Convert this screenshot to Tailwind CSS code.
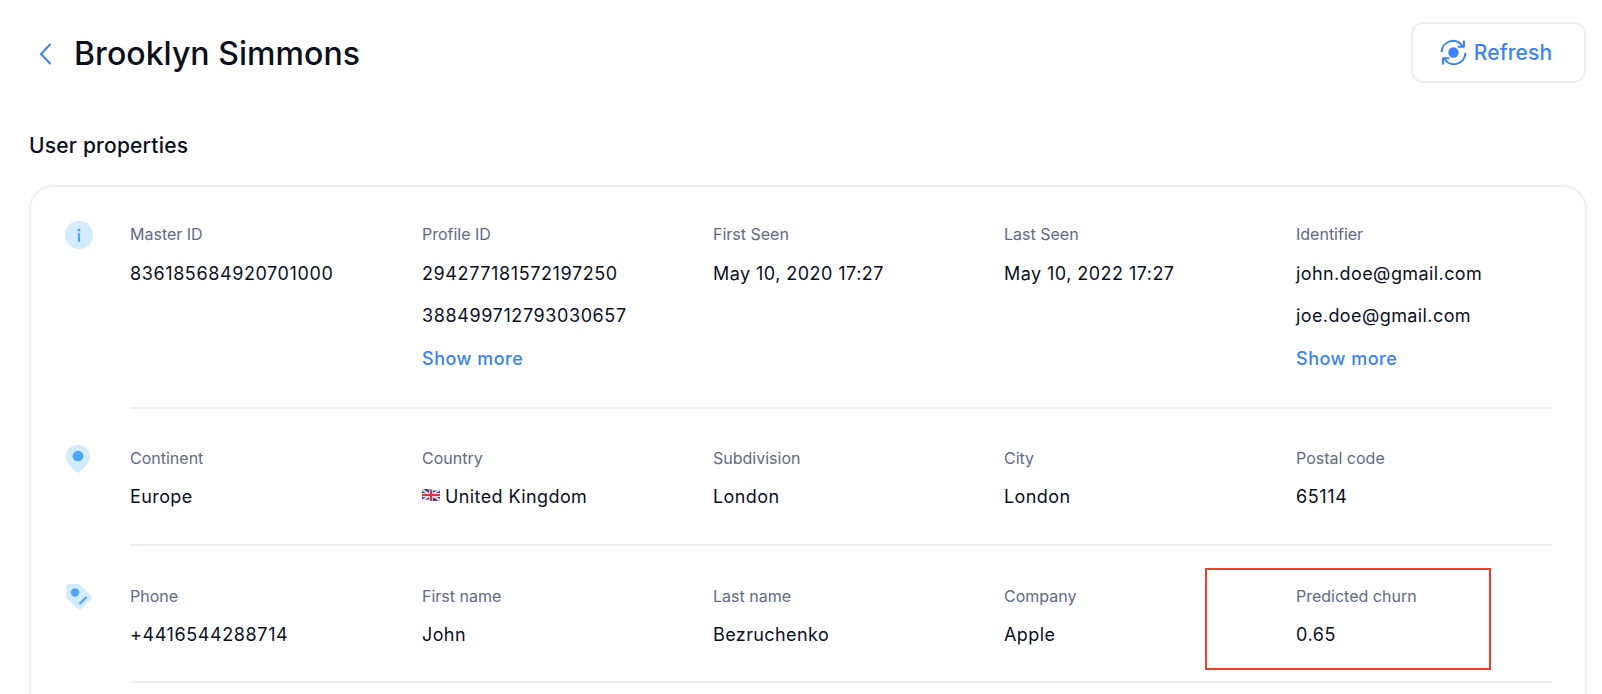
<!DOCTYPE html>
<html lang="en">
<head>
  <meta charset="UTF-8">
  <title>Brooklyn Simmons</title>
  <script src="https://cdn.jsdelivr.net/npm/@tailwindcss/browser@4"></script>
</head>
<body class="bg-white overflow-hidden h-[694px] font-['Inter',sans-serif] text-[#0b0f1e]">
  <div class="pl-[29px] pr-[15px] pt-[22px]">
    <!-- header -->
    <div class="flex items-center justify-between h-[60px]">
      <div class="flex items-center">
        <svg class="ml-[10px] mt-[3px] w-[13px] h-[22px]" viewBox="0 0 13 22" fill="none"><path d="M11 1.5 2 11l9 9.5" stroke="#3b82f6" stroke-width="2" stroke-linecap="round" stroke-linejoin="round"/></svg>
        <h1 class="ml-[22px] mt-[4px] text-[32px] font-medium leading-[40px] tracking-[0.05px]">Brooklyn Simmons</h1>
      </div>
      <button class="w-[175px] h-[61px] mr-[1px] mt-[1px] border-2 border-[#eeeff5] rounded-[12px] flex items-center justify-center gap-[7px] pr-[5px] text-[#3b82f6] text-[21px] font-medium tracking-[0.1px]">
        <svg class="w-[27px] h-[27px]" viewBox="0 0 26 26" fill="none">
          <circle cx="13" cy="13" r="5" fill="#3b82f6"/>
          <path d="M1.5 12.5A11 11 0 0 1 21.5 6.5" stroke="#3b82f6" stroke-width="2"/>
          <path d="M24.500 13.500A11 11 0 0 1 4.500 19.500" stroke="#3b82f6" stroke-width="2"/>
          <path d="M23 1.500v6h-6" stroke="#3b82f6" stroke-width="2" stroke-linejoin="round"/>
          <path d="M3 24.500v-6h6" stroke="#3b82f6" stroke-width="2" stroke-linejoin="round"/>
        </svg>
        Refresh
      </button>
    </div>

    <h2 class="mt-[51px] text-[21px] font-medium leading-[26px] tracking-[0.2px]">User properties</h2>

    <!-- card -->
    <div class="relative mt-[26px] border-2 border-[#eeeff5] rounded-[24px] pl-[99px] pr-[33px] h-[600px] text-[18px] leading-[24px] tracking-[0.4px]">
      <!-- row 1 -->
      <div class="relative h-[222px] pt-[36px] border-b-2 border-[#eeeff5]">
        <div class="absolute left-[-65px] top-[34px] w-[28px] h-[28px] rounded-full bg-[#d2ecfe] flex items-center justify-center">
          <svg class="w-[4px] h-[14px]" viewBox="0 0 4 14"><circle cx="2" cy="2" r="1.6" fill="#4da6fa"/><rect x="0.9" y="5" width="2.2" height="9" rx="1" fill="#4da6fa"/></svg>
        </div>
        <div class="grid grid-cols-[292px_291px_291px_292px_1fr]">
          <div>
            <p class="text-[16px] leading-[22px] tracking-normal text-[#616a85]">Master ID</p>
            <p class="mt-[17px] tracking-[0.6px]">836185684920701000</p>
          </div>
          <div>
            <p class="text-[16px] leading-[22px] tracking-normal text-[#616a85]">Profile ID</p>
            <p class="mt-[17px] tracking-[0.6px]">294277181572197250</p>
            <p class="mt-[18px] tracking-[0.6px]">388499712793030657</p>
            <a class="block mt-[19px] font-medium tracking-[0.5px] text-[#3b82f6]">Show more</a>
          </div>
          <div>
            <p class="text-[16px] leading-[22px] tracking-normal text-[#616a85]">First Seen</p>
            <p class="mt-[17px] tracking-[0.45px]">May 10, 2020 17:27</p>
          </div>
          <div>
            <p class="text-[16px] leading-[22px] tracking-normal text-[#616a85]">Last Seen</p>
            <p class="mt-[17px] tracking-[0.45px]">May 10, 2022 17:27</p>
          </div>
          <div>
            <p class="text-[16px] leading-[22px] tracking-normal text-[#616a85]">Identifier</p>
            <p class="mt-[17px]">john.doe@gmail.com</p>
            <p class="mt-[18px]">joe.doe@gmail.com</p>
            <a class="block mt-[19px] font-medium tracking-[0.5px] text-[#3b82f6]">Show more</a>
          </div>
        </div>
      </div>
      <!-- row 2 -->
      <div class="relative h-[137px] pt-[38px] border-b-2 border-[#eeeff5]">
        <svg class="absolute left-[-65px] top-[35px] w-[26px] h-[30px]" viewBox="0 0 26 30">
          <path d="M13 1C6 1 1 6 1 12.500C1 19 8 25 13 29C18 25 25 19 25 12.500C25 6 20 1 13 1Z" fill="#d2ecfe"/>
          <circle cx="13" cy="12" r="5.300" fill="#4da6fa"/>
        </svg>
        <div class="grid grid-cols-[292px_291px_291px_292px_1fr]">
          <div>
            <p class="text-[16px] leading-[22px] tracking-normal text-[#616a85]">Continent</p>
            <p class="mt-[16px]">Europe</p>
          </div>
          <div>
            <p class="text-[16px] leading-[22px] tracking-normal text-[#616a85]">Country</p>
            <p class="mt-[16px] flex items-center">
              <svg class="w-[18px] h-[14px] mr-[5px] mb-[5px]" viewBox="0 0 60 44">
                <path d="M0 5C10 0 20 2 30 5C40 8 50 8 60 4V39C50 43 40 43 30 40C20 37 10 35 0 40Z" fill="#2a3f8f"/>
                <path d="M0 5 60 39M60 4 0 40" stroke="#f4d7dc" stroke-width="7"/>
                <path d="M30 4v37M0 22h60" stroke="#f4d7dc" stroke-width="13"/>
                <path d="M30 4v37M0 22h60" stroke="#d8324a" stroke-width="7"/>
              </svg>
              United Kingdom
            </p>
          </div>
          <div>
            <p class="text-[16px] leading-[22px] tracking-normal text-[#616a85]">Subdivision</p>
            <p class="mt-[16px]">London</p>
          </div>
          <div>
            <p class="text-[16px] leading-[22px] tracking-normal text-[#616a85]">City</p>
            <p class="mt-[16px]">London</p>
          </div>
          <div>
            <p class="text-[16px] leading-[22px] tracking-normal text-[#616a85]">Postal code</p>
            <p class="mt-[16px] tracking-[0.6px]">65114</p>
          </div>
        </div>
      </div>
      <!-- row 3 -->
      <div class="relative h-[137px] pt-[39px] border-b-2 border-[#eeeff5]">
        <svg class="absolute left-[-65px] top-[37px] w-[28px] h-[28px]" viewBox="0 0 28 28">
          <path d="M5 1H12.500C14 1 15 1.500 16 2.500L25.500 12C27 13.500 27 15.500 25.500 17L17.500 25C16 26.500 14 26.500 12.500 25.500L2.500 16C1.500 15 1 14 1 12.500V5C1 2.500 2.500 1 5 1Z" fill="#d2ecfe"/>
          <circle cx="10" cy="9.500" r="4.200" fill="#4da6fa"/>
          <path d="M15 20.500 21 14.500" stroke="#4da6fa" stroke-width="2.200" stroke-linecap="round"/>
        </svg>
        <div class="grid grid-cols-[292px_291px_291px_292px_1fr]">
          <div>
            <p class="text-[16px] leading-[22px] tracking-normal text-[#616a85]">Phone</p>
            <p class="mt-[16px] tracking-[0.6px]">+4416544288714</p>
          </div>
          <div>
            <p class="text-[16px] leading-[22px] tracking-normal text-[#616a85]">First name</p>
            <p class="mt-[16px]">John</p>
          </div>
          <div>
            <p class="text-[16px] leading-[22px] tracking-normal text-[#616a85]">Last name</p>
            <p class="mt-[16px]">Bezruchenko</p>
          </div>
          <div>
            <p class="text-[16px] leading-[22px] tracking-normal text-[#616a85]">Company</p>
            <p class="mt-[16px]">Apple</p>
          </div>
          <div>
            <p class="text-[16px] leading-[22px] tracking-normal text-[#616a85]">Predicted churn</p>
            <p class="mt-[16px] tracking-[0.6px]">0.65</p>
          </div>
        </div>
        <!-- highlight box -->
        <div class="absolute left-[1075px] top-[22px] w-[286px] h-[102px] border-2 border-[#ee4026]"></div>
      </div>
    </div>
  </div>
</body>
</html>
